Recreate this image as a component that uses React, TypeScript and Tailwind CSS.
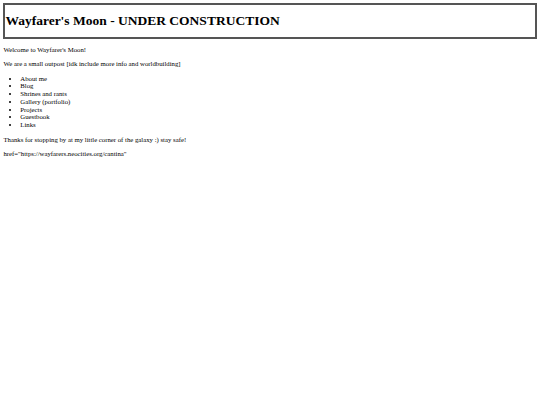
const links = ["About me", "Blog", "Shrines and rants", "Gallery (portfolio)", "Projects", "Guestbook", "Links"];

export default function App() {
  return (
    <div className="min-h-[405px] bg-white p-[3.4px] font-['Liberation_Serif','Times_New_Roman',serif] text-[6.75px] leading-[1.15] text-black">
      <div className="border-2 border-[#555555] py-[8px]">
        <h1 className="text-[13.5px] font-bold leading-[1.15]">Wayfarer's Moon - UNDER CONSTRUCTION</h1>
      </div>
      <p className="my-[6.75px]">Welcome to Wayfarer's Moon!</p>
      <p className="my-[6.75px]">We are a small outpost [idk include more info and worldbuilding]</p>
      <ul className="my-[6.75px] list-disc pl-[16.9px]">
        {links.map((l) => (
          <li key={l}>{l}</li>
        ))}
      </ul>
      <p className="my-[6.75px]">Thanks for stopping by at my little corner of the galaxy :) stay safe!</p>
      <p className="my-[6.75px]">href="https://wayfarers.neocities.org/cantina"</p>
    </div>
  );
}
